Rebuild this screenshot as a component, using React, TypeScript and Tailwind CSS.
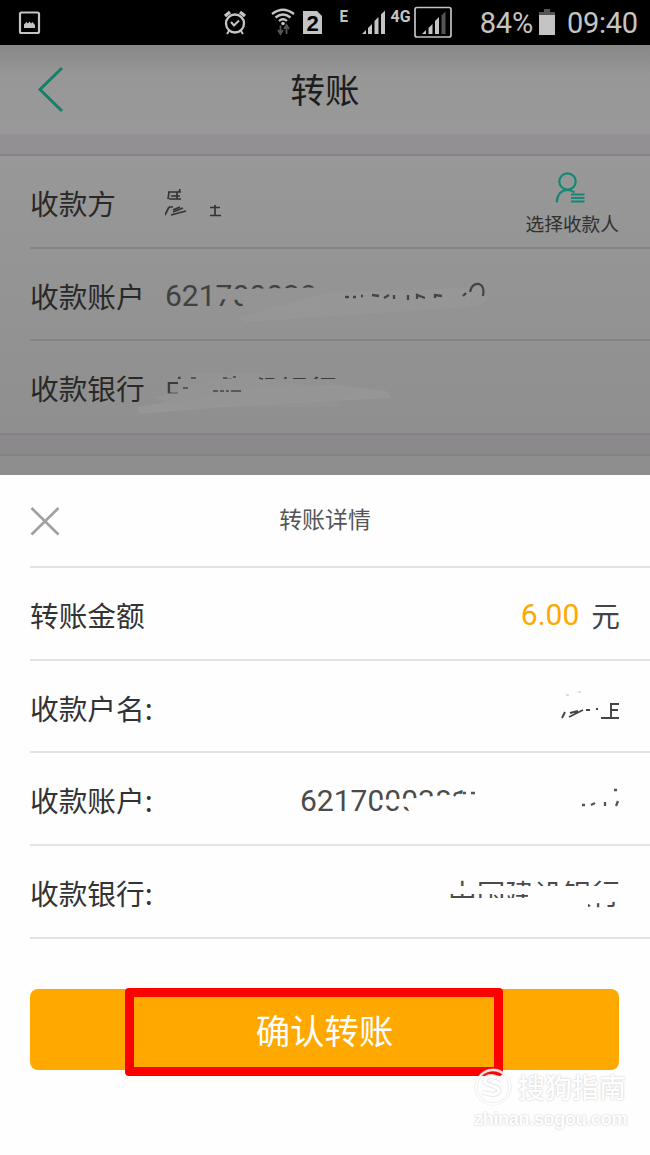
import type { ReactNode } from "react";

function StatusBar() {
  return (
    <div className="flex h-[45px] bg-black font-[Roboto] text-[#c4c4c4]">
      <svg width="466" height="45" viewBox="0 0 466 45" fill="none" stroke="#c4c4c4">
        <rect x="20" y="12.500" width="19" height="20.500" rx="1.500" strokeWidth="2.200" />
        <path d="M24 28v-3.500l2.500-2.500 1.500 1.500 1.500-2 1.500 2 1.500-1.500 2.500 3v3z" fill="#c4c4c4" stroke="none" />
        <circle cx="235" cy="23.500" r="9" strokeWidth="2.300" />
        <path d="M231 22l3 3.500 5-5M229 31l-2 3M241 31l2 3" strokeWidth="2" />
        <path d="M225 16l5-4M245 16l-5-4" strokeWidth="3.400" />
        <path d="M272 14q11-8.500 22 0M275.500 17.500q7.500-6 15 0M279 21q4-3.500 8 0" strokeWidth="2.300" />
        <circle cx="283" cy="23.500" r="1.800" fill="#c4c4c4" stroke="none" />
        <path d="M280.500 25.500v7M278 30l2.500 4 2.500-4M286.500 34v-7M284 29l2.500-4 2.500 4" stroke="#555" strokeWidth="1.800" />
        <path d="M303 11h14l5 5v18h-19z" fill="#c4c4c4" stroke="none" />
        <text x="306.500" y="31" fontSize="22" fontWeight="700" fill="#000" stroke="none" fontFamily="Liberation Sans, sans-serif">2</text>
        <text x="339.500" y="21.500" fontSize="16" fontWeight="700" fill="#c4c4c4" stroke="none" textLength="8.500" lengthAdjust="spacingAndGlyphs">E</text>
        <g fill="#c4c4c4" stroke="none">
          <path d="M362 34l4-4v4zM368 34v-6l4-4v10zM374.500 34V21l4-4v17zM381 34V14.500l4-4V34z" />
          <text x="390.500" y="21.500" fontSize="16" fontWeight="700" textLength="20" lengthAdjust="spacingAndGlyphs">4G</text>
          <path d="M422 34l4-4v4zM428.500 34v-6l4-4v10zM435 34V21l4-4v17z" />
          <path d="M441.500 34V15.500l4-4V34z" fill="#555" />
        </g>
        <rect x="415" y="7.500" width="36" height="29.500" rx="2" strokeWidth="1.700" />
      </svg>
      <div className="flex w-[67px] items-center justify-end pt-[2px] text-[29px] leading-none tracking-[-0.200px] whitespace-nowrap">84%</div>
      <svg className="ml-[6px]" width="17" height="45">
        <path d="M5 9h6v3h5v3H0v-3h5z" fill="#555" />
        <path d="M0 15h16v20H0z" fill="#c4c4c4" />
      </svg>
      <div className="flex items-center pt-[2px] pl-[11px] text-[29px] leading-none tracking-[-0.300px] whitespace-nowrap">09:40</div>
    </div>
  );
}

function FormRow({ label, children, last }: { label: string; children: ReactNode; last?: boolean }) {
  return (
    <div className="h-[92.700px] pl-[30px]">
      <div className={last ? "flex h-full items-center pt-[2px]" : "flex h-full items-center border-b-2 border-[#858486] pt-[4px]"}>
        <span className="w-[135px] shrink-0 text-[28.700px] leading-none whitespace-nowrap text-[#292929]">{label}</span>
        {children}
      </div>
    </div>
  );
}

function DetailRow({ label, children }: { label: string; children: ReactNode }) {
  return (
    <div className="h-[92.700px] pl-[30px]">
      <div className="flex h-full items-center justify-between border-b-2 border-[#e3e3e3] pt-[4px] pr-[30px]">
        <span className="text-[28.700px] leading-none whitespace-nowrap text-[#333]">{label}</span>
        {children}
      </div>
    </div>
  );
}

export default function App() {
  return (
    <div className="flex h-[1155px] w-[650px] flex-col overflow-hidden bg-[#fefefe] font-['Noto_Sans_CJK_SC',sans-serif]">
      <StatusBar />
      <header className="grid h-[89px] shrink-0 grid-cols-3 items-center bg-linear-to-b from-[#888] via-[#979797] via-35% to-[#999]">
        <svg width="100" height="89" fill="none" stroke="#157f6c" strokeWidth="3">
          <path d="M62 23L40 44.500l22 21.500" />
        </svg>
        <h1 className="pb-[3px] text-center text-[34.500px] leading-none text-[#1d1d1d]">转账</h1>
      </header>
      <div className="h-[22px] shrink-0 border-b-2 border-[#858386] bg-[#929093]" />

      <main className="h-[277px] shrink-0 bg-linear-to-b from-[#989898] to-[#8f8f8f]">
        <FormRow label="收款方">
          <svg width="110" height="50" className="mt-[2px] shrink-0" fill="none" stroke="#333" strokeWidth="1.700">
            <path d="M3 13h13M4 13l-1 7M6 17h9M4 20h12M12 13v7M14 13l1-3M4 28l-4 8M4 28h4M8 31l7-3M8 33l10-4M6 36l15-4M50 26v11M45 28.500h10M45 36.500h11" />
          </svg>
          <div className="mr-[31px] ml-auto flex flex-col items-center gap-[9px] pb-[2px]">
            <svg width="34" height="34" viewBox="0 0 34 34" fill="none" stroke="#168675" strokeWidth="2.200">
              <circle cx="12.500" cy="10.500" r="8.200" />
              <path d="M1.500 31.500Q3 19 12.500 19q4 0 7 2.500M16 23.500h13.500M16 27h13.500M16 30.500h13.500" />
            </svg>
            <span className="text-[18.700px] leading-none whitespace-nowrap text-[#303030]">选择收款人</span>
          </div>
        </FormRow>
        <FormRow label="收款账户">
          <div className="relative h-[60px] w-[340px]">
            <span className="font-[Roboto] text-[30px] leading-[60px] whitespace-nowrap text-[#414141]">621700038</span>
            <svg className="absolute top-0 left-0" width="350" height="64" fill="none">
              <path d="M50 23h30l72-1.500V45H80l-4-11-22-1h-4z" fill="#949494" />
              <path d="M73 52L160 27l156-6 7 11-8 8L80 56z" fill="#979797" fillOpacity=".8" />
              <path d="M180 31h4m4 0h3m5-1h2m9-1l7 1m5 2l5-3m5 0v4m14-4v5m9-1v-4l8 3m10 0v-3l7 1m21 0l3-3M305 26q2-9 9-8q6 2 4 12" stroke="#444" strokeWidth="2.300" />
            </svg>
          </div>
        </FormRow>
        <FormRow label="收款银行" last>
          <div className="relative h-[60px] w-[300px]">
            <span className="text-[28.700px] leading-[60px] whitespace-nowrap text-[#3b3b3b]">中国建设银行</span>
            <svg className="absolute top-0 -left-[30px]" width="270" height="64">
              <path d="M43 20h163v28H28V35h15z" fill="#929292" />
              <path d="M54 15h36v7H54zM98 15h32v7H98z" fill="#939393" />
              <path d="M2 48l130-20 70-2 50 6 4 7L90 48 5 55z" fill="#979797" fillOpacity=".8" />
              <path d="M18 39L90 16l25-2 8 7 100 10-20 10-150 6z" fill="#959595" fillOpacity=".65" />
              <path d="M48 29h5M78 32h5m2 0h4m2 0h3m2 0h10M56 19h5M88 19h4M98 18h3M124 19l4 1" stroke="#454545" strokeWidth="1.500" fill="none" />
            </svg>
          </div>
        </FormRow>
      </main>
      <div className="h-[23px] shrink-0 border-y-2 border-[#838184] bg-[#8c898d]" />
      <div className="h-[19px] shrink-0 bg-[#8e8e8e]" />

      <section className="flex flex-1 flex-col bg-[#fefefe]">
        <div className="h-[93px] shrink-0 pl-[30px]">
          <div className="grid h-full grid-cols-[200px_190px_1fr] items-center border-b-2 border-[#e3e3e3]">
            <svg width="32" height="32" fill="none" stroke="#a0a0a0" strokeWidth="2.600">
              <path d="M1.500 3l27 26.500M28.500 3l-27 26.500" />
            </svg>
            <h2 className="pb-[5px] text-center text-[22.900px] leading-none text-[#555]">转账详情</h2>
          </div>
        </div>
        <DetailRow label="转账金额">
          <div className="flex items-center gap-[12px] text-[28.700px] leading-none text-[#444]">
            <span className="font-[Roboto] text-[30px] text-[#ffa800]">6.00</span>
            <span>元</span>
          </div>
        </DetailRow>
        <DetailRow label="收款户名:">
          <svg width="64" height="40" fill="none" stroke="#444" strokeWidth="1.900">
            <path d="M10 7h3M22 4h3" stroke="#bbb" strokeWidth="1" />
            <path d="M9 24l-3 6M14 25l8-2M13 29l14-7M30 22h4M40 21h2M55 16v14M54 16h9M54 22h8M45 30h18" />
          </svg>
        </DetailRow>
        <DetailRow label="收款账户:">
          <div className="relative h-[60px] w-[320px]">
            <span className="font-[Roboto] text-[30px] leading-[60px] whitespace-nowrap text-[#4b4b4b]">6217000381</span>
            <svg className="absolute top-0 left-0" width="330" height="60" fill="none">
              <path d="M79 29l37-2 18-2 38-3v24H112l-5-10-28-2z" fill="#fefefe" />
              <path d="M154 25l2-3M163 22h3M171 22h4M282 34h3M291 34l4-2M305 31v4M318 30l-2 5M314 19h3" stroke="#555" strokeWidth="2.300" />
            </svg>
          </div>
        </DetailRow>
        <DetailRow label="收款银行:">
          <div className="relative h-[60px] w-[172px]">
            <span className="text-[28.700px] leading-[60px] whitespace-nowrap text-[#4b4b4b]">中国建设银行</span>
            <svg className="absolute top-0 left-0" width="176" height="60">
              <path d="M0 23h176V38l-36 3v8H0V35h80v-4H0z" fill="#fefefe" />
            </svg>
          </div>
        </DetailRow>
        <div className="relative mt-[50px] ml-[30px] h-[81px] w-[589px]">
          <button className="h-full w-full rounded-[8px] bg-[#ffa800] pb-[1px] text-[34.400px] leading-none text-white">确认转账</button>
          <div className="absolute -top-px left-[95px] h-[88px] w-[378px] rounded-[4px] border-9 border-[#fd0000]" />
          <div className="absolute top-[77px] left-[443px] w-[156px] text-white opacity-90 [text-shadow:0_0_2px_#b8b8b8]">
            <div className="flex items-center gap-[5px]">
              <svg width="40" height="42" viewBox="0 0 40 42" fill="none">
                <circle cx="20" cy="21" r="17" stroke="#ddd" strokeOpacity=".7" strokeWidth="3" />
                <circle cx="20" cy="21" r="17" stroke="#fff" strokeWidth="1.800" />
                <path d="M29 14q-14-7-17 0c-2 6 15 5 14 11q-2 6-17 1" stroke="#ddd" strokeWidth="5" />
                <path d="M29 14q-14-7-17 0c-2 6 15 5 14 11q-2 6-17 1" stroke="#fff" strokeWidth="3.500" />
              </svg>
              <span className="text-[27px] leading-none font-medium whitespace-nowrap">搜狗指南</span>
            </div>
            <div className="mt-[2px] pl-[1px] font-['Liberation_Sans'] text-[18px] leading-none font-bold tracking-[-0.300px] whitespace-nowrap">zhinan.sogou.com</div>
          </div>
        </div>
      </section>
    </div>
  );
}
